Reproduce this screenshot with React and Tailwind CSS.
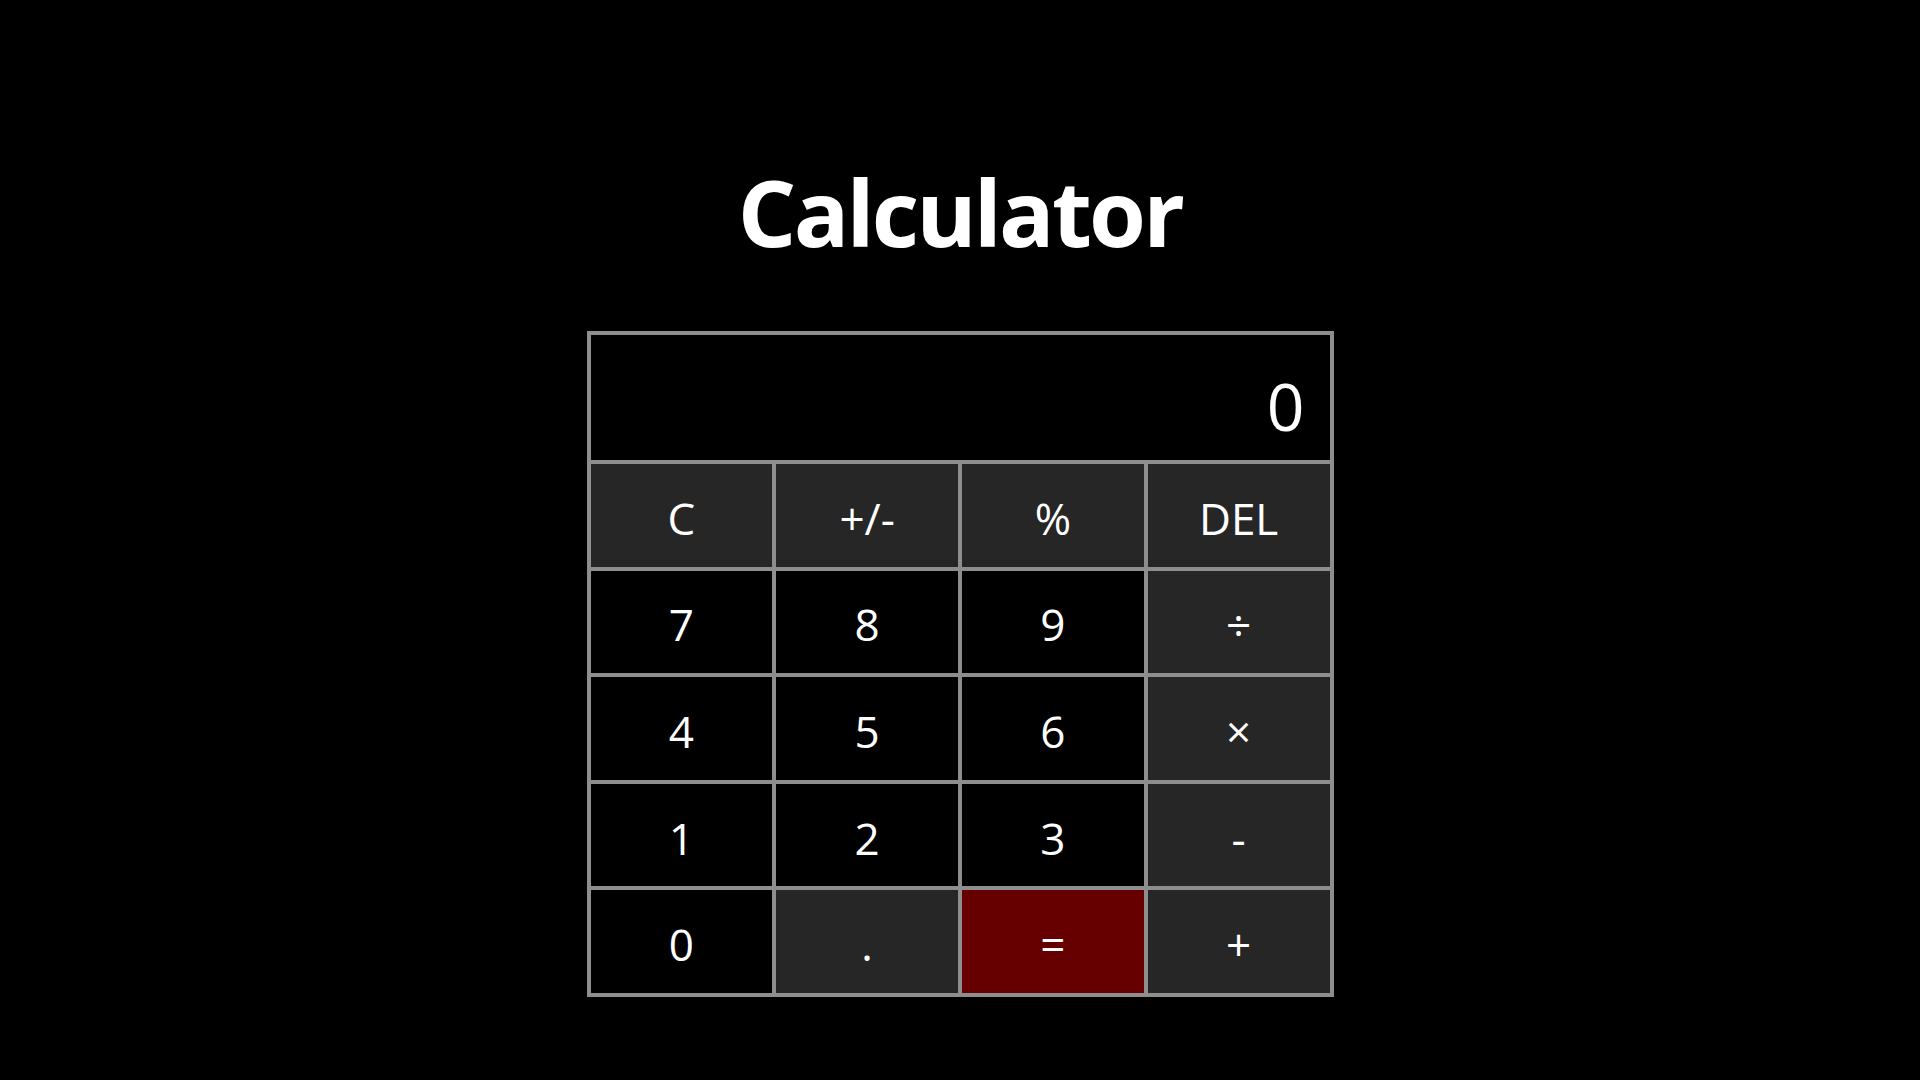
import React from "react";

const rows = [
  [
    { l: "C", dark: true },
    { l: "+/-", dark: true },
    { l: "%", dark: true },
    { l: "DEL", dark: true },
  ],
  [{ l: "7" }, { l: "8" }, { l: "9" }, { l: "÷", dark: true }],
  [{ l: "4" }, { l: "5" }, { l: "6" }, { l: "×", dark: true }],
  [{ l: "1" }, { l: "2" }, { l: "3" }, { l: "-", dark: true }],
  [{ l: "0" }, { l: ".", dark: true }, { l: "=", red: true }, { l: "+", dark: true }],
];

export default function App() {
  return (
    <div
      className="min-h-screen w-full bg-black flex flex-col items-center pt-[166px]"
      style={{ fontFamily: '"Open Sans", "Noto Sans", sans-serif' }}
    >
      <h1 className="text-white font-bold text-[92px] leading-none tracking-[-2.8px] mb-[73px]">Calculator</h1>
      <div className="w-[747px] border-2 border-[#8e8e8e] flex flex-col">
        <div className="h-[129px] border-2 border-[#8e8e8e] bg-black flex items-end justify-end pr-[25px] pb-[5px]">
          <span className="text-white text-[66px]">0</span>
        </div>
        {rows.map((row, i) => (
          <div key={i} className="grid grid-cols-4">
            {row.map((b, j) => (
              <button
                key={j}
                className={
                  "h-[106.6px] border-2 border-[#8e8e8e] flex items-center justify-center pt-[5px] text-white text-[44px] " +
                  (b.red ? "bg-[#660000]" : b.dark ? "bg-[#262626]" : "bg-black")
                }
              >
                {b.l}
              </button>
            ))}
          </div>
        ))}
      </div>
    </div>
  );
}
